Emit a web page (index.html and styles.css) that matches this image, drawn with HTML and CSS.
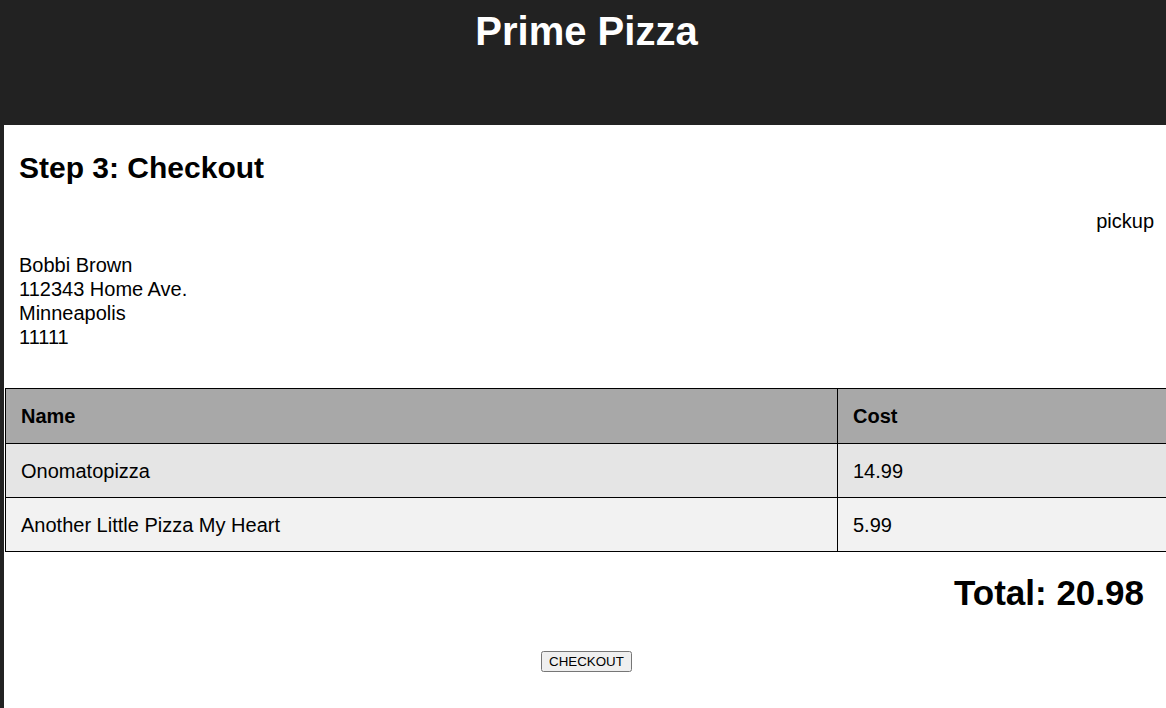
FILE: index.html
```html
<!DOCTYPE html>
<html>
<head>
<meta charset="utf-8">
<title>Prime Pizza</title>
<link rel="stylesheet" href="styles.css">
</head>
<body>
<div class="app">
  <header class="site-header">
    <h1 class="site-title">Prime Pizza</h1>
  </header>
  <main class="checkout">
    <div class="checkout-inner">
      <h2 class="step-title">Step 3: Checkout</h2>
      <p class="order-type">pickup</p>
      <p class="address">Bobbi Brown<br>112343 Home Ave.<br>Minneapolis<br>11111</p>
    </div>
    <table class="order-table">
      <colgroup>
        <col class="col-name">
        <col class="col-cost">
      </colgroup>
      <thead>
        <tr><th>Name</th><th>Cost</th></tr>
      </thead>
      <tbody>
        <tr class="row-odd"><td>Onomatopizza</td><td>14.99</td></tr>
        <tr class="row-even"><td>Another Little Pizza My Heart</td><td>5.99</td></tr>
      </tbody>
    </table>
    <h2 class="total">Total: 20.98</h2>
    <div class="actions">
      <button class="checkout-btn" type="button">CHECKOUT</button>
    </div>
  </main>
</div>
</body>
</html>
```
FILE: styles.css
```css
html, body {
  margin: 0;
  padding: 0;
  overflow: hidden;
}

body {
  background: #222222;
  font-family: "Liberation Sans", Arial, Helvetica, sans-serif;
  color: #000;
  height: 708px;
}

.app {
  margin-left: 4px;
  width: 1165px;
  background: #ffffff;
  min-height: 708px;
}

.site-header {
  background: #222222;
  height: 125px;
  margin-left: -4px;
  padding-left: 4px;
  overflow: hidden;
}

.site-title {
  margin: 8px 0 0;
  color: #ffffff;
  font-size: 40px;
  font-weight: bold;
  line-height: 46px;
  text-align: center;
}

.checkout-inner {
  padding: 0 15px;
  overflow: hidden;
}

.step-title {
  margin: 25px 0 24px;
  font-size: 30px;
  line-height: 35px;
  font-weight: bold;
}

.order-type {
  margin: 0 0 20px;
  font-size: 20px;
  line-height: 24px;
  text-align: right;
}

.address {
  margin: 0 0 39px;
  font-size: 20px;
  line-height: 24px;
}

.order-table {
  border-collapse: collapse;
  width: 1180px;
  margin-left: 1px;
  table-layout: fixed;
  font-size: 20px;
  line-height: 24px;
}

.col-name {
  width: 832px;
}

.order-table th,
.order-table td {
  border: 1px solid #000;
  padding: 15px 15px 14px;
  text-align: left;
}

.order-table th {
  background: #a8a8a8;
  font-weight: bold;
  padding-top: 15px;
  padding-bottom: 15px;
}

.row-odd td {
  background: #e5e5e5;
}

.row-even td {
  background: #f2f2f2;
}

.total {
  margin: 21px 0 0;
  padding-right: 25px;
  font-size: 35px;
  line-height: 40px;
  text-align: right;
  font-weight: bold;
}

.actions {
  margin-top: 38px;
  text-align: center;
}

.checkout-btn {
  font-family: "Liberation Sans", Arial, sans-serif;
  font-size: 13.33px;
}
```
